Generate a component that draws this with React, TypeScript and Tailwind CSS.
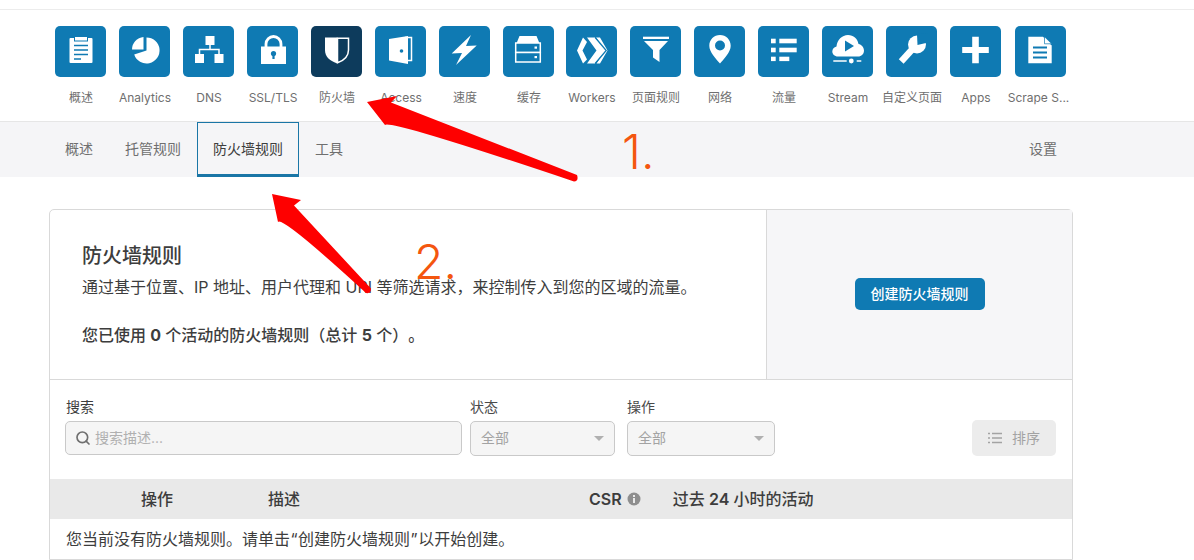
import React from "react";
import { Search } from "lucide-react";

const B = "#0f7ab3";

const icons: Record<string, React.ReactNode> = {
  clip: (
    <>
      <rect x="14.5" y="12" width="23" height="25" rx="1" fill="#fff" />
      <rect x="19.5" y="10.5" width="13" height="4.5" fill="#fff" stroke={B} strokeWidth="1" />
      <path d="M19 19.5h14M19 24h14M19 28.5h14M19 33h7" stroke={B} strokeWidth="1.7" />
    </>
  ),
  pie: (
    <>
      <path d="M27.5 11.5A13 13 0 1 1 15.2 28.5L27.5 24.5Z" fill="#fff" />
      <path d="M24.5 11v12.5H13A12.5 12.5 0 0 1 24.5 11Z" fill="#fff" />
    </>
  ),
  dns: (
    <>
      <rect x="22.5" y="10" width="9" height="9" fill="#fff" />
      <rect x="12" y="28" width="9" height="9" fill="#fff" />
      <rect x="31.5" y="28" width="9" height="9" fill="#fff" />
      <path d="M27 19v4.5M16.5 28v-4.5h19.5V28" stroke="#fff" strokeWidth="1.5" fill="none" />
    </>
  ),
  lock: (
    <>
      <path d="M19 21v-3a7.5 7.5 0 0 1 15 0v3" stroke="#fff" strokeWidth="2.8" fill="none" />
      <rect x="14" y="20.5" width="25" height="17.5" fill="#fff" />
      <circle cx="26.5" cy="27.5" r="2.6" fill={B} />
      <rect x="25.4" y="28" width="2.2" height="5" fill={B} />
    </>
  ),
  shield: (
    <>
      <path d="M14 11.5h12.5v26C19 35 14 31 14 24Z" fill="#fff" />
      <path d="M26.5 12.3h11v11.7c0 6.500-4.500 10.500-11 12.800Z" fill="none" stroke="#fff" strokeWidth="1.5" />
    </>
  ),
  door: (
    <>
      <path d="M30 11.500h6.500v23H33" stroke="#fff" strokeWidth="1.5" fill="none" />
      <path d="M14 13 33 10v28L14 34.500Z" fill="#fff" />
      <circle cx="26.500" cy="25" r="1.800" fill={B} />
    </>
  ),
  bolt: <path d="M32 9 12.700 27.500 23 27 17 39 37.700 19.500 27 20Z" fill="#fff" />,
  cache: (
    <>
      <path d="M12 21 16.500 10h17L38 21Z" fill="#fff" />
      <rect x="12.700" y="17" width="24.600" height="9.500" fill={B} stroke="#fff" strokeWidth="1.500" />
      <rect x="12.700" y="26.500" width="24.600" height="9.500" fill={B} stroke="#fff" strokeWidth="1.500" />
      <rect x="31.500" y="20.500" width="2.500" height="2.200" fill="#fff" />
      <rect x="31.500" y="30" width="2.500" height="2.200" fill="#fff" />
    </>
  ),
  workers: (
    <>
      <path d="M17 11.500 11 24.500 17 37.500 21 33.500 16.500 24.500 21 16Z" fill="#fff" />
      <path d="M21 11.500h8L40 24.500 29 37.500h-8L30.500 24.500Z" fill="#fff" />
      <path d="M30 11.500h4L41.500 24.500 34 37.500h-3.500L38.500 24.500Z" fill="#fff" />
      <path d="M29.200 11.500 40.200 24.500 29.200 37.500" stroke={B} strokeWidth="1.300" fill="none" />
    </>
  ),
  filter: (
    <>
      <rect x="13" y="10.700" width="26" height="2.300" fill="#fff" />
      <path d="M14 15h24L29.500 24v12L23 31.500V24Z" fill="#fff" />
    </>
  ),
  pin: (
    <path
      fillRule="evenodd"
      d="M26 9C20 9 15.300 13.700 15.300 19.700 15.300 26 22 33 26 37.500 30 33 36.700 26 36.700 19.700 36.700 13.700 32 9 26 9ZM26 14.500A5 5 0 1 1 26 24.500 5 5 0 1 1 26 14.500Z"
      fill="#fff"
    />
  ),
  list: (
    <>
      <rect x="13" y="12.700" width="4.700" height="4.600" fill="#fff" />
      <rect x="13" y="21.700" width="4.700" height="4.600" fill="#fff" />
      <rect x="13" y="30.700" width="4.700" height="4.400" fill="#fff" />
      <rect x="21.300" y="12.700" width="17.400" height="4.600" fill="#fff" />
      <rect x="21.300" y="21.700" width="17.400" height="4.600" fill="#fff" />
      <rect x="21.300" y="30.700" width="10" height="4.400" fill="#fff" />
    </>
  ),
  stream: (
    <>
      <path
        d="M16 30.500C12.500 30.500 10.300 28 10.300 25.500 10.300 23 12 21 14.500 20.500 15 14 20 9 26 9 31.500 9 35.500 12.500 36.500 18 39.500 18.500 42 21.500 42 24.500 42 28 39.500 30.500 36 30.500Z"
        fill="#fff"
      />
      <path d="M23 14.500 32 20 23 25.500Z" fill={B} />
      <path d="M11.300 35h13.400M34.700 35h4.600" stroke="#fff" strokeWidth="1.300" />
      <circle cx="29.300" cy="35" r="2.400" fill="#fff" />
    </>
  ),
  wrench: (
    <>
      <circle cx="31" cy="18.500" r="9" fill="#fff" />
      <path d="M31.500 19 31 8 42 7.500 42 16.500Z" fill={B} />
      <path d="M15.200 35.500 27 22.500" stroke="#fff" strokeWidth="6.500" />
    </>
  ),
  plus: <path d="M22.200 10.700h6.600v10.300h10v6h-10v10.300h-6.600V27h-10v-6h10Z" fill="#fff" />,
  doc: (
    <>
      <path d="M13.300 10.700H28L36.700 19.500V37.300H13.300Z" fill="#fff" />
      <path d="M29.500 10.700 36.700 17.800H29.500Z" fill="#fff" stroke={B} strokeWidth="0.700" />
      <path d="M18 21.500h14M18 26.500h14M18 31.500h14" stroke={B} strokeWidth="1.900" />
    </>
  ),
};

const nav: [string, string][] = [
  ["概述", "clip"],
  ["Analytics", "pie"],
  ["DNS", "dns"],
  ["SSL/TLS", "lock"],
  ["防火墙", "shield"],
  ["Access", "door"],
  ["速度", "bolt"],
  ["缓存", "cache"],
  ["Workers", "workers"],
  ["页面规则", "filter"],
  ["网络", "pin"],
  ["流量", "list"],
  ["Stream", "stream"],
  ["自定义页面", "wrench"],
  ["Apps", "plus"],
  ["Scrape S...", "doc"],
];

function NavItem({ label, icon }: { label: string; icon: string }) {
  const active = icon === "shield";
  const cell = icon === "workers" ? "-ml-px flex w-[64px] flex-col items-center" : icon === "doc" ? "ml-px flex w-[64px] flex-col items-center" : "flex w-[64px] flex-col items-center";
  return (
    <div className={cell}>
      <div className={active ? "h-[51px] w-[51px] rounded-[5px] bg-[#0d3b5c]" : "h-[51px] w-[51px] rounded-[5px] bg-[#0f7ab3]"}>
        <svg viewBox="0 0 51 51" width="51" height="51">
          {icons[icon]}
        </svg>
      </div>
      <div className={icon === "doc" ? "mr-[3px] mt-[13px] whitespace-nowrap text-[12px] leading-[16px] text-[#6f6f6f]" : "ml-[2px] mt-[13px] whitespace-nowrap text-[12px] leading-[16px] text-[#6f6f6f]"}>{label}</div>
    </div>
  );
}

function SelectBox({ width, label }: { width: string; label: string }) {
  return (
    <div className={width}>
      <div className="mb-[4px] text-[14px] leading-[20px] text-[#4a4a4a]">{label}</div>
      <div className="flex h-[35px] items-center justify-between rounded-[5px] border border-[#c9c9c9] bg-[#f5f5f5] pb-[2px] pl-[10px] pr-[10px] text-[14px] text-[#a3a3a3]">
        <span>全部</span>
        <span className="mt-[2px] h-0 w-0 border-x-[5px] border-t-[5px] border-x-transparent border-t-[#b0b0b0]" />
      </div>
    </div>
  );
}

export default function App() {
  return (
    <div className="relative h-[560px] w-[1194px] overflow-hidden bg-white font-[Inter,'Noto_Sans_CJK_SC',sans-serif]">
      <div className="mt-[9px] h-[112px] border-t border-[#ececec]">
        <div className="flex px-[48px] pt-[16px]">
          {nav.map(([l, i]) => (
            <NavItem key={i} label={l} icon={i} />
          ))}
        </div>
      </div>

      <div className="flex h-[56px] justify-between border-t border-[#e6e6e6] bg-[#f5f5f7] pl-[49px] pr-[121px] text-[14px] text-[#6f6f6f]">
        <div className="flex">
          <div className="flex items-center px-4 pb-[2px]">概述</div>
          <div className="flex items-center px-4 pb-[2px]">托管规则</div>
          <div className="flex items-center border border-b-[3px] border-[#1a76a6] px-[15px] text-[#3d3d3d]">防火墙规则</div>
          <div className="flex items-center px-4 pb-[2px]">工具</div>
        </div>
        <div className="flex items-center px-4 pb-[2px]">设置</div>
      </div>

      <div className="ml-[49px] mt-[32px] w-[1024px] rounded-t-[5px] border border-[#d9d9d9]">
        <div className="flex h-[170px] border-b border-[#d9d9d9]">
          <div className="w-[716px] pl-[32px] pt-[32px] text-[16px] text-[#3d3d3d]">
            <h1 className="text-[20px] font-medium leading-[28px]">防火墙规则</h1>
            <p className="mt-[5px] leading-[24px]">通过基于位置、IP 地址、用户代理和 URI 等筛选请求，来控制传入到您的区域的流量。</p>
            <p className="mt-[24px] font-medium leading-[24px] [text-spacing-trim:space-all]">
              您已使用 <span className="font-bold">0</span> 个活动的防火墙规则（总计 <span className="font-bold">5</span> 个）。
            </p>
          </div>
          <div className="flex flex-1 items-center justify-center border-l border-[#d9d9d9] bg-[#f6f6f8] pb-[2px]">
            <button className="h-[32px] w-[130px] rounded-[5px] bg-[#0f7ab3] text-[14px] font-medium text-white">创建防火墙规则</button>
          </div>
        </div>

        <div className="flex h-[99px] items-start pl-[15px] pr-[16px] pt-[17px]">
          <div className="w-[397px]">
            <div className="mb-[4px] pl-[1px] text-[14px] leading-[20px] text-[#3d3d3d]">搜索</div>
            <div className="flex h-[34px] items-center rounded-[5px] border border-[#c9c9c9] bg-[#f5f5f5] pb-[1px] pl-[9px] text-[14px] text-[#b0b0b0]">
              <Search size={16} strokeWidth={2.500} className="mr-[4px] text-[#6f6f6f]" />
              搜索描述...
            </div>
          </div>
          <div className="ml-[8px]">
            <SelectBox width="w-[145px]" label="状态" />
          </div>
          <div className="ml-[12px]">
            <SelectBox width="w-[148px]" label="操作" />
          </div>
          <button className="ml-auto mt-[23px] flex h-[36px] w-[84px] items-center justify-center gap-[10px] rounded-[5px] bg-[#ececec] pb-[1px] text-[14px] text-[#a3a3a3]">
            <svg width="14" height="12" viewBox="0 0 14 12">
              <path d="M0 1.500h2M4 1.500h10M0 6h2M4 6h10M0 10.500h2M4 10.500h10" stroke="#a3a3a3" strokeWidth="1.300" />
            </svg>
            排序
          </button>
        </div>

        <div className="flex h-[40px] items-center bg-[#e9e9e9] text-[16px] font-medium text-[#3d3d3d]">
          <span className="ml-[91px]">操作</span>
          <span className="ml-[95px]">描述</span>
          <span className="ml-[289px] font-semibold">CSR</span>
          <svg className="ml-[5px]" width="14" height="14" viewBox="0 0 14 14">
            <circle cx="7" cy="7" r="6.500" fill="#8e8e8e" />
            <rect x="6" y="6" width="2" height="5" fill="#e9e9e9" />
            <rect x="6" y="3" width="2" height="2" fill="#e9e9e9" />
          </svg>
          <span className="ml-[32px]">
            过去 <span className="font-semibold">24</span> 小时的活动
          </span>
        </div>
        <div className="flex h-[40px] items-center pl-[16px] text-[16px] text-[#3d3d3d]">
          <span>
            您当前没有防火墙规则。请单击<span className="mx-[0.5px]">“</span>创建防火墙规则<span className="mx-[0.5px]">”</span>以开始创建。
          </span>
        </div>
      </div>

      <svg className="pointer-events-none absolute left-0 top-0" width="1194" height="560" viewBox="0 0 1194 560">
        <path d="M367 102 397 96 391 102.500 577 175 Q579 181 574 181.500 388 119 385 125Z" fill="#fe0000" />
        <path d="M272 194 301 200 294 205.500 371 288.500 Q371 294 366 293 282 216 278 222Z" fill="#fe0000" />
      </svg>
      <div className="absolute left-[622px] top-[124px] text-[48px] font-light leading-[56px] text-[#f4560f]">1.</div>
      <div className="absolute left-[414px] top-[234px] text-[48px] font-light leading-[56px] text-[#f4560f]">2.</div>
    </div>
  );
}
